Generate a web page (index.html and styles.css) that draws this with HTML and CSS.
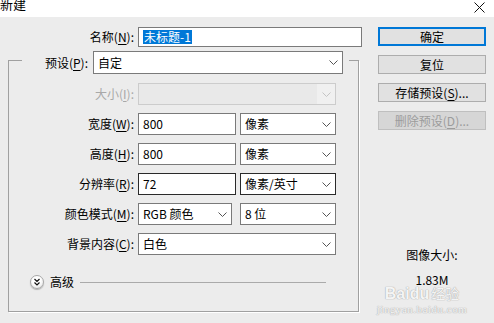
FILE: index.html
```html
<!DOCTYPE html>
<html lang="zh-CN">
<head>
    <meta charset="UTF-8">
    <title>新建</title>
    <link rel="stylesheet" href="styles.css">
</head>
<body>
    <div class="window">
        <div class="titlebar">
            <span class="title">新建</span>
            <svg class="close" viewBox="0 0 11 11" width="11" height="11"><path d="M0.5 0.5 L10.5 10.5 M10.5 0.5 L0.5 10.5" stroke="#111" stroke-width="1" fill="none"/></svg>
        </div>
        <div class="body">
            <div class="main">
                <div class="row name-row">
                    <span class="lbl">名称(<u>N</u>):</span>
                    <div class="field name-field"><span class="selected">未标题-1</span></div>
                </div>

                <div class="group">
                    <div class="preset-row">
                        <span class="lbl preset-lbl">预设(<u>P</u>):</span>
                        <div class="field combo preset">自定
                            <svg class="arrow" viewBox="0 0 9 5" width="9" height="5"><path d="M0.5 0.5 L4.5 4.5 L8.5 0.5" fill="none" stroke="#555"/></svg>
                        </div>
                    </div>

                    <div class="row disabled">
                        <span class="lbl">大小(<u>I</u>):</span>
                        <div class="field combo full">
                            <span class="drop-part">
                                <svg class="arrow" viewBox="0 0 9 5" width="9" height="5"><path d="M0.5 0.5 L4.5 4.5 L8.5 0.5" fill="none" stroke="#c4c4c4"/></svg>
                            </span>
                        </div>
                    </div>

                    <div class="row">
                        <span class="lbl">宽度(<u>W</u>):</span>
                        <div class="field input">800</div>
                        <div class="field combo unit">像素
                            <svg class="arrow" viewBox="0 0 9 5" width="9" height="5"><path d="M0.5 0.5 L4.5 4.5 L8.5 0.5" fill="none" stroke="#555"/></svg>
                        </div>
                    </div>

                    <div class="row">
                        <span class="lbl">高度(<u>H</u>):</span>
                        <div class="field input">800</div>
                        <div class="field combo unit">像素
                            <svg class="arrow" viewBox="0 0 9 5" width="9" height="5"><path d="M0.5 0.5 L4.5 4.5 L8.5 0.5" fill="none" stroke="#555"/></svg>
                        </div>
                    </div>

                    <div class="row">
                        <span class="lbl">分辨率(<u>R</u>):</span>
                        <div class="field input dark">72</div>
                        <div class="field combo unit dark">像素/英寸
                            <svg class="arrow" viewBox="0 0 9 5" width="9" height="5"><path d="M0.5 0.5 L4.5 4.5 L8.5 0.5" fill="none" stroke="#555"/></svg>
                        </div>
                    </div>

                    <div class="row">
                        <span class="lbl">颜色模式(<u>M</u>):</span>
                        <div class="field combo mode">RGB 颜色
                            <svg class="arrow" viewBox="0 0 9 5" width="9" height="5"><path d="M0.5 0.5 L4.5 4.5 L8.5 0.5" fill="none" stroke="#555"/></svg>
                        </div>
                        <div class="field combo unit bits">8 位
                            <svg class="arrow" viewBox="0 0 9 5" width="9" height="5"><path d="M0.5 0.5 L4.5 4.5 L8.5 0.5" fill="none" stroke="#555"/></svg>
                        </div>
                    </div>

                    <div class="row">
                        <span class="lbl">背景内容(<u>C</u>):</span>
                        <div class="field combo full">白色
                            <svg class="arrow" viewBox="0 0 9 5" width="9" height="5"><path d="M0.5 0.5 L4.5 4.5 L8.5 0.5" fill="none" stroke="#555"/></svg>
                        </div>
                    </div>

                    <div class="advanced">
                        <span class="expander">
                            <svg viewBox="0 0 14 14" width="14" height="14"><path d="M4.5 4 L7 6.5 L9.5 4 M4.5 7.5 L7 10 L9.5 7.5" fill="none" stroke="#111" stroke-width="1.2"/></svg>
                        </span>
                        <span class="adv-text">高级</span>
                        <span class="adv-line"></span>
                    </div>
                </div>
            </div>

            <div class="side">
                <button class="btn default">确定</button>
                <button class="btn">复位</button>
                <button class="btn">存储预设(<u>S</u>)...</button>
                <button class="btn off">删除预设(<u>D</u>)...</button>
                <div class="info">
                    <div class="info-lbl">图像大小:</div>
                    <div class="info-val">1.83M</div>
                </div>
            </div>
        </div>

        <div class="watermark">
            <div class="wm-main"><span>Bai</span><span class="wm-du">du</span><span class="wm-cn">经验</span></div>
            <div class="wm-url">jingyan.baidu.com</div>
        </div>
    </div>
</body>
</html>
```

FILE: styles.css
```css
body {
    margin: 0;
    background: #ececec;
    font: 12px/1 "Noto Sans CJK SC", "Noto Sans", sans-serif;
    color: #000;
}

.window {
    position: relative;
    width: 494px;
    height: 323px;
    overflow: hidden;
}

u {
    text-decoration: underline;
    text-underline-offset: 2px;
}

/* title bar */
.titlebar {
    height: 17px;
    background: #fff;
    display: flex;
    justify-content: space-between;
    overflow: hidden;
}

.title {
    font-size: 13px;
    line-height: 13px;
    margin-top: -3px;
}

.close {
    margin: 2px 9px 0 0;
}

.body {
    display: flex;
}

.main {
    width: 362px;
    padding-top: 10px;
}

/* rows */
.row {
    display: flex;
    align-items: center;
    height: 22px;
    margin-top: 8px;
}

.name-row {
    height: 20px;
    margin-top: 0;
}

.lbl {
    width: 125px;
    margin-right: 4px;
    text-align: right;
    white-space: nowrap;
}

.name-row .lbl {
    width: 134px;
}

.field {
    box-sizing: border-box;
    height: 100%;
    background: #fff;
    border: 1px solid #7a7a7a;
    padding-left: 4px;
    display: flex;
    align-items: center;
    white-space: nowrap;
}

.name-field {
    width: 224px;
}

.selected {
    background: #0078d7;
    color: #fff;
    line-height: 14px;
    padding: 0 1px;
}

.arrow {
    margin-left: auto;
    margin-right: 4px;
}

.full {
    width: 198px;
}

.input {
    width: 98px;
    margin-right: 4px;
}

.unit {
    width: 96px;
}

.mode {
    width: 94px;
    margin-right: 8px;
}

.dark {
    border-color: #2a2a2a;
}

/* disabled size row */
.disabled .lbl {
    color: #a8a8a8;
}

.disabled .field {
    background: #e9e9e9;
    border-color: #cccccc;
    padding-left: 0;
    justify-content: flex-end;
}

.drop-part {
    width: 18px;
    height: 100%;
    background: #f0f0f0;
    display: flex;
    align-items: center;
}

/* group box */
.group {
    margin: 13px 0 0 8px;
    width: 351px;
    height: 252px;
    box-sizing: border-box;
    border: 1px solid #a0a0a0;
    box-shadow: 1px 1px 0 #fff;
}

.preset-row {
    display: flex;
    align-items: center;
    height: 23px;
    width: 327px;
    margin: -10px 0 9px 13px;
    background: #ececec;
}

.preset-lbl {
    width: 66px;
    margin-right: 5px;
}

.preset {
    width: 250px;
}

.preset-row + .row {
    margin-top: 0;
}

.advanced {
    display: flex;
    align-items: center;
    height: 14px;
    margin: 20px 32px 0 21px;
}

.expander {
    width: 14px;
    height: 14px;
    box-sizing: border-box;
    border-radius: 50%;
    border: 1px solid #a8a8a8;
    background: radial-gradient(circle at 45% 35%, #ffffff 40%, #dcdcdc 100%);
    box-shadow: 0 1px 1px rgba(0, 0, 0, 0.25);
    display: flex;
    align-items: center;
    justify-content: center;
}

.expander svg {
    flex: none;
}

.adv-text {
    margin-left: 6px;
    font-size: 12px;
}

.adv-line {
    flex: 1;
    height: 1px;
    margin-left: 6px;
    background: #aaaaaa;
}

/* right column */
.side {
    width: 108px;
    margin-left: 16px;
    padding-top: 10px;
    display: flex;
    flex-direction: column;
    gap: 9px;
}

.btn {
    height: 19px;
    box-sizing: border-box;
    padding: 0;
    background: #e1e1e1;
    border: 1px solid #adadad;
    font: 12px/1 "Noto Sans CJK SC", "Noto Sans", sans-serif;
    color: #000;
}

.btn.default {
    border-color: #0078d7;
    box-shadow: inset 0 0 0 1px #0078d7;
}

.btn.off {
    background: #d6d6d6;
    border-color: #bfbfbf;
    color: #9c9c9c;
}

.info {
    margin-top: 109px;
    text-align: center;
}

.info-lbl {
    line-height: 14px;
}

.info-val {
    margin-top: 11px;
    line-height: 14px;
}

/* baidu watermark */
.watermark {
    position: absolute;
    left: 376px;
    top: 286px;
    width: 92px;
    color: rgba(255, 255, 255, 0.9);
    text-shadow: 0 0 1px #a8a8a8, 0 0 1px #a8a8a8;
    text-align: center;
}

.wm-main {
    font: bold 16px/14px "Liberation Sans", sans-serif;
}

.wm-cn {
    font: 14px/14px "Noto Sans CJK SC", sans-serif;
    margin-left: 2px;
}

.wm-url {
    font: 11px/12px "Liberation Serif", serif;
    letter-spacing: 0.5px;
    margin-top: 2px;
}
```
